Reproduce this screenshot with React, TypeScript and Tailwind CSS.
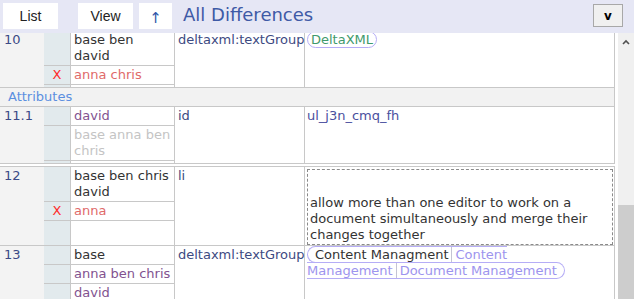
import type { ReactNode } from "react";

type Version = { text: string; color: string; removed?: boolean };

type Row = {
  num: string;
  versions: Version[];
  element: string;
  content: ReactNode;
};

const DARK = "text-[#333333]";
const RED = "text-[#df6a6a]";
const PURPLE = "text-[#82528f]";
const GREY = "text-[#c4c4c4]";

function Pill({ children }: { children: ReactNode }) {
  return (
    <span className="rounded-full border border-[#b5adf6] px-[3px] text-[#3f9a6c]">
      {children}
    </span>
  );
}

function TextGroup() {
  return (
    <span className="rounded-full border border-[#b5adf6] pl-[4px] pr-[4px] [box-decoration-break:slice]">
      <span className="pl-[3px] pr-[3px] text-[#333333]">Content Managment</span>
      <span className="border-l border-[#c4c4d4] px-[3px] text-[#9d94ee]">Content Management</span>
      <span className="border-l border-[#c4c4d4] px-[3px] text-[#9d94ee]">Document Management</span>
    </span>
  );
}

const rows: Row[] = [
  {
    num: "10",
    versions: [
      { text: "base ben david", color: DARK },
      { text: "anna chris", color: RED, removed: true },
    ],
    element: "deltaxml:textGroup",
    content: (
      <div className="pl-[2px] pt-px">
        <Pill>DeltaXML</Pill>
      </div>
    ),
  },
  {
    num: "11.1",
    versions: [
      { text: "david", color: PURPLE },
      { text: "base anna ben chris", color: GREY },
    ],
    element: "id",
    content: <div className="pl-[2px] pt-px text-[#4a4f9e]">ul_j3n_cmq_fh</div>,
  },
  {
    num: "12",
    versions: [
      { text: "base ben chris david", color: DARK },
      { text: "anna", color: RED, removed: true },
    ],
    element: "li",
    content: (
      <div className="ml-[2px] mr-px mt-[2px] border border-dashed border-[#8a8a8a] pb-px pl-[2px] pt-[25px] text-[#333333]">
        allow more than one editor to work on a document simultaneously and merge their changes together
      </div>
    ),
  },
  {
    num: "13",
    versions: [
      { text: "base", color: DARK },
      { text: "anna ben chris", color: PURPLE },
      { text: "david", color: PURPLE },
    ],
    element: "deltaxml:textGroup",
    content: (
      <div className="pl-[2px] pt-px">
        <TextGroup />
      </div>
    ),
  },
];

function DiffRow({ row, className = "" }: { row: Row; className?: string }) {
  return (
    <div className={`grid grid-cols-[44px_131px_130px_310px] border-b border-[#c8c8c8] ${className}`}>
      <div className="bg-[#f3f3f3] pl-1 pt-px text-[#3b4a86]">{row.num}</div>
      <div className="flex flex-col border-r border-[#c8c8c8]">
        {row.versions.map((v) => (
          <div key={v.text} className="flex border-b border-[#c8c8c8]">
            <div className="w-[27px] shrink-0 border-r border-[#c8c8c8] bg-[#e2eaed] pt-px text-center text-[#ff2a2a]">
              {v.removed ? "X" : ""}
            </div>
            <div className={`flex-1 bg-white py-px pl-[3px] pr-[2px] ${v.color}`}>{v.text}</div>
          </div>
        ))}
        <div className="flex min-h-[2px] flex-1">
          <div className="w-[27px] shrink-0 border-r border-[#c8c8c8] bg-[#e2eaed]" />
          <div className="flex-1 bg-white" />
        </div>
      </div>
      <div className="border-r border-[#c8c8c8] pl-[3px] pt-px text-[#3d4a82]">{row.element}</div>
      <div className="border-r border-[#c8c8c8]">{row.content}</div>
    </div>
  );
}

export default function App() {
  return (
    <div className="flex h-[299px] w-[634px] flex-col overflow-hidden bg-white font-['DejaVu_Sans',sans-serif] text-[13px] leading-4">
      <header className="flex h-[33px] shrink-0 items-start bg-[#e6e7f5] font-['Liberation_Sans',Arial,sans-serif] text-[14px]">
        <button className="ml-[3px] mt-[3px] h-[26px] w-[55px] bg-white text-[#222]">List</button>
        <button className="ml-[20px] mt-[3px] h-[26px] w-[55px] bg-white text-[#222]">View</button>
        <button className="ml-[6px] mt-[3px] h-[26px] w-[33px] bg-white pt-[4px] font-['DejaVu_Sans',sans-serif] text-[15px] text-[#2d55a8]">
          ↑
        </button>
        <h1 className="ml-[11px] mt-[3px] font-['DejaVu_Sans',sans-serif] text-[18px] leading-[24px] text-[#3e5aa6]">
          All Differences
        </h1>
        <button className="ml-auto mr-[11px] mt-[4px] h-[23px] w-[30px] border border-[#a8a8a8] bg-[#f0f0f0] font-['DejaVu_Sans',sans-serif] text-[12px] font-bold text-black">
          v
        </button>
      </header>

      <div className="flex min-h-0 flex-1">
        <div className="w-[618px] shrink-0 overflow-hidden">
          <div className="-mt-[2px] w-[615px]">
            <DiffRow row={rows[0]} />
            <div className="h-[19px] border-b border-r border-[#c8c8c8] bg-[#f2f2f2] pl-2 pt-px text-[#5b8fe0]">
              Attributes
            </div>
            <DiffRow row={rows[1]} />
            <DiffRow row={rows[2]} className="mt-[2px] border-t" />
            <DiffRow row={rows[3]} />
          </div>
        </div>
        <div className="flex w-[16px] shrink-0 flex-col bg-[#f0f0f0]">
          <div className="flex h-[14px] items-end justify-center pb-[2px]">
            <svg width="8" height="6" viewBox="0 0 8 6">
              <path d="M1 5 L4 2 L7 5" fill="none" stroke="#505050" strokeWidth="1.6" />
            </svg>
          </div>
          <div className="flex-1" />
          <div className="h-[94px] bg-[#cdcdcd]" />
        </div>
      </div>
    </div>
  );
}
